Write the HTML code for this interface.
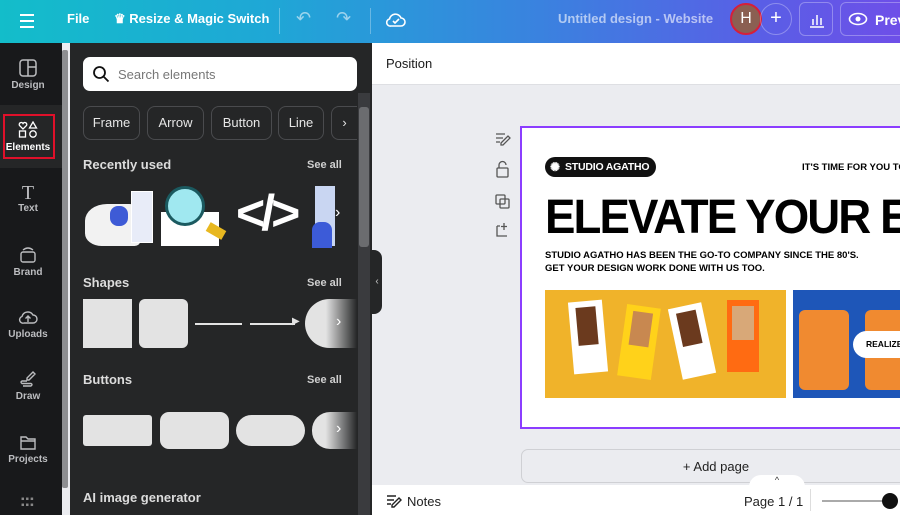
<!DOCTYPE html>
<html><head><meta charset="utf-8"><style>
*{box-sizing:border-box;margin:0;padding:0}
body{width:900px;height:515px;overflow:hidden;font-family:"Liberation Sans",sans-serif;position:relative;background:#ebecf0}
.a{position:absolute}
.top{left:0;top:0;width:900px;height:43px;background:linear-gradient(90deg,#13bdca 0%,#1fa7d6 30%,#3a82df 60%,#5a5ee6 85%,#6e4fe8 100%);color:#fff;font-weight:bold;font-size:13px}
.rail{left:0;top:43px;width:62px;height:472px;background:#18191b}
.ri{position:absolute;left:0;width:56px;text-align:center;color:#bcbdc0;font-size:10px;font-weight:bold}
.ri svg{display:block;margin:0 auto 3px}
.panel{left:70px;top:43px;width:302px;height:472px;background:#252627}
.chip{position:absolute;top:63px;height:34px;border:1px solid #4a4b4e;border-radius:8px;color:#e6e6e6;font-size:13px;line-height:32px;text-align:center}
.h{position:absolute;color:#dcdcdc;font-size:13px;font-weight:bold}
.sa{position:absolute;left:237px;color:#cfcfcf;font-size:11px;font-weight:bold}
.lg{background:#e3e3e3}
</style></head><body>
<div class="a top">
  <div class="a" style="left:20px;top:14px;width:14px"><div style="height:2px;background:#fff;margin-bottom:4px"></div><div style="height:2px;background:#fff;margin-bottom:4px"></div><div style="height:2px;background:#fff"></div></div>
  <div class="a" style="left:67px;top:11px">File</div>
  <div class="a" style="left:114px;top:11px;white-space:nowrap">♛ Resize &amp; Magic Switch</div>
  <div class="a" style="left:279px;top:8px;width:1px;height:26px;background:rgba(255,255,255,.3)"></div>
  <div class="a" style="left:296px;top:8px;font-size:18px;font-weight:normal;opacity:.55">↶</div>
  <div class="a" style="left:336px;top:8px;font-size:18px;font-weight:normal;opacity:.55">↷</div>
  <div class="a" style="left:370px;top:8px;width:1px;height:26px;background:rgba(255,255,255,.3)"></div>
  <svg class="a" style="left:385px;top:10px" width="22" height="20" viewBox="0 0 22 20"><path d="M6 16h10a4 4 0 0 0 0-8 6 6 0 0 0-11.5 1A3.5 3.5 0 0 0 6 16z" fill="none" stroke="#fff" stroke-width="1.6"/><path d="M8 11l2 2 4-4" fill="none" stroke="#fff" stroke-width="1.6"/></svg>
  <div class="a" style="left:558px;top:11px;color:rgba(255,255,255,.6);font-size:13px">Untitled design - Website</div>
  <div class="a" style="left:730px;top:3px;width:32px;height:32px;border-radius:50%;background:#8b5f52;border:2px solid #d61f3a;text-align:center;line-height:28px;font-weight:normal;font-size:16px">H</div>
  <div class="a" style="left:760px;top:3px;width:32px;height:32px;border-radius:50%;border:1px solid rgba(255,255,255,.3);text-align:center;line-height:29px;font-size:20px;font-weight:normal">+</div>
  <div class="a" style="left:799px;top:2px;width:34px;height:34px;border-radius:6px;border:1px solid rgba(255,255,255,.3)"><svg width="34" height="34"><path d="M10 24h14M13 22v-6M17 22v-10M21 22v-7" stroke="#fff" stroke-width="1.5"/></svg></div>
  <div class="a" style="left:840px;top:2px;width:70px;height:34px;border-radius:6px;border:1px solid rgba(255,255,255,.3)"><svg class="a" style="left:7px;top:9px" width="20" height="14"><ellipse cx="10" cy="7" rx="8.5" ry="5.5" fill="none" stroke="#fff" stroke-width="1.6"/><circle cx="10" cy="7" r="2.5" fill="#fff"/></svg><div class="a" style="left:34px;top:9px;font-size:14px">Prev</div></div>
</div>
<div class="a rail">
  <div class="ri" style="top:16px"><svg width="18" height="18"><rect x="1" y="1" width="16" height="16" rx="3" fill="none" stroke="#bcbdc0" stroke-width="1.5"/><path d="M9 1v16M9 8h8" stroke="#bcbdc0" stroke-width="1.5"/></svg>Design</div>
  <div class="a" style="left:0;top:62px;width:62px;height:63px;background:#252627"></div>
  <div class="a" style="left:3px;top:71px;width:52px;height:45px;border:2px solid #e0102a"></div>
  <div class="ri" style="top:78px;color:#fff"><svg width="20" height="18"><path d="M5 8L1.5 4.5a2 2 0 0 1 3.5-2 2 2 0 0 1 3.5 2z" fill="none" stroke="#fff" stroke-width="1.3"/><path d="M15 1l3.5 6h-7z" fill="none" stroke="#fff" stroke-width="1.3"/><rect x="1.5" y="10" width="6" height="6" fill="none" stroke="#fff" stroke-width="1.3"/><circle cx="15" cy="13" r="3.2" fill="none" stroke="#fff" stroke-width="1.3"/></svg>Elements</div>
  <div class="ri" style="top:140px"><div style="font-family:'Liberation Serif',serif;font-size:20px;line-height:20px;font-weight:normal">T</div>Text</div>
  <div class="ri" style="top:203px"><svg width="18" height="18"><rect x="2" y="6" width="14" height="10" rx="2" fill="none" stroke="#bcbdc0" stroke-width="1.4"/><path d="M4 4q5-4 10 0" fill="none" stroke="#bcbdc0" stroke-width="1.4"/></svg>Brand</div>
  <div class="ri" style="top:265px"><svg width="20" height="18"><path d="M6 15h9a4 4 0 0 0 0-8 6 6 0 0 0-11 1.5A3.3 3.3 0 0 0 6 15z" fill="none" stroke="#bcbdc0" stroke-width="1.4"/><path d="M10 14V8M7.5 10.5L10 8l2.5 2.5" fill="none" stroke="#bcbdc0" stroke-width="1.4"/></svg>Uploads</div>
  <div class="ri" style="top:327px"><svg width="18" height="18"><path d="M14 2l2 2-6 6H8V8z M8 11H3q-2 1 0 2.5h9q2 1 0 2.5H4" fill="none" stroke="#bcbdc0" stroke-width="1.4"/></svg>Draw</div>
  <div class="ri" style="top:390px"><svg width="18" height="18"><path d="M2 4h5l2 2h7v10H2z M2 8h14" fill="none" stroke="#bcbdc0" stroke-width="1.4"/></svg>Projects</div>
  <div class="a" style="left:21px;top:454px;width:16px;color:#888;font-size:10px;line-height:6px;letter-spacing:1px">▪▪▪<br>▪▪▪</div>
</div>
<div class="a" style="left:62px;top:50px;width:6px;height:438px;background:#8d8e91;border-radius:2px"></div>
<div class="a panel">
  <div class="a" style="left:13px;top:14px;width:274px;height:34px;background:#fff;border-radius:7px"><svg class="a" style="left:9px;top:8px" width="18" height="18"><circle cx="7.5" cy="7.5" r="5.5" fill="none" stroke="#111" stroke-width="1.8"/><path d="M11.5 11.5l5 5" stroke="#111" stroke-width="1.8"/></svg><div class="a" style="left:35px;top:10px;color:#777;font-size:13px">Search elements</div></div>
  <div class="chip" style="left:13px;width:57px">Frame</div>
  <div class="chip" style="left:77px;width:57px">Arrow</div>
  <div class="chip" style="left:141px;width:61px">Button</div>
  <div class="chip" style="left:208px;width:46px">Line</div>
  <div class="chip" style="left:261px;width:26px;border-right:none;border-radius:8px 0 0 8px">›</div>
  <div class="h" style="left:13px;top:114px">Recently used</div><div class="sa" style="top:116px">See all</div>
  <div class="a" style="left:13px;top:143px;width:275px;height:62px;overflow:hidden">
    <div class="a" style="left:2px;top:18px;width:55px;height:42px;background:#f2f2f2;border-radius:40% 20% 10% 30%"></div>
    <div class="a" style="left:27px;top:20px;width:18px;height:20px;background:#3e5bd6;border-radius:8px"></div>
    <div class="a" style="left:48px;top:5px;width:22px;height:52px;background:#e8ecf8;border:1px solid #fff"></div>
    <div class="a" style="left:78px;top:26px;width:58px;height:34px;background:#fff"></div>
    <div class="a" style="left:82px;top:0;width:40px;height:40px;border-radius:50%;background:#a0e8f0;border:3px solid #1b5a60"></div>
    <div class="a" style="left:124px;top:40px;width:18px;height:10px;background:#e8b820;transform:rotate(30deg)"></div>
    <div class="a" style="left:153px;top:-2px;color:#fff;font-size:50px;font-weight:bold;letter-spacing:-4px">&lt;/&gt;</div>
    <div class="a" style="left:232px;top:0;width:20px;height:60px;background:#c9d6f2"></div>
    <div class="a" style="left:229px;top:36px;width:20px;height:26px;background:#3c5bd8;border-radius:8px 8px 0 0"></div>
    <div class="a" style="left:252px;top:18px;color:#fff;font-size:16px">›</div>
  </div>
  <div class="h" style="left:13px;top:232px">Shapes</div><div class="sa" style="top:234px">See all</div>
  <div class="a lg" style="left:13px;top:256px;width:49px;height:49px"></div>
  <div class="a lg" style="left:69px;top:256px;width:49px;height:49px;border-radius:6px"></div>
  <div class="a" style="left:125px;top:280px;width:47px;height:1.5px;background:#e3e3e3"></div>
  <div class="a" style="left:180px;top:280px;width:45px;height:1.5px;background:#e3e3e3"></div>
  <div class="a" style="left:222px;top:273px;color:#e3e3e3;font-size:10px">▶</div>
  <div class="a" style="left:235px;top:256px;width:52px;height:49px;border-radius:25px 0 0 25px;background:linear-gradient(90deg,#e3e3e3 40%,#252627)"></div>
  <div class="a" style="left:266px;top:270px;color:#fff;font-size:16px">›</div>
  <div class="h" style="left:13px;top:329px">Buttons</div><div class="sa" style="top:331px">See all</div>
  <div class="a lg" style="left:13px;top:372px;width:69px;height:31px;border-radius:3px"></div>
  <div class="a lg" style="left:90px;top:369px;width:69px;height:37px;border-radius:9px"></div>
  <div class="a lg" style="left:166px;top:372px;width:69px;height:31px;border-radius:16px"></div>
  <div class="a" style="left:242px;top:369px;width:45px;height:37px;border-radius:18px 0 0 18px;background:linear-gradient(90deg,#e3e3e3 30%,#252627)"></div>
  <div class="a" style="left:266px;top:377px;color:#fff;font-size:16px">›</div>
  <div class="h" style="left:13px;top:447px">AI image generator</div>
  <div class="a" style="left:288px;top:50px;width:12px;height:422px;background:#3a3b3e"></div>
  <div class="a" style="left:289px;top:64px;width:10px;height:140px;background:#6b6c6f;border-radius:3px"></div>
</div>
<div class="a" style="left:372px;top:250px;width:10px;height:64px;background:#252627;border-radius:0 8px 8px 0;color:#ccc;font-size:10px;line-height:64px;text-align:center">‹</div>
<div class="a" style="left:372px;top:43px;width:528px;height:42px;background:#fff;border-bottom:1px solid #dedfe3"><div class="a" style="left:14px;top:13px;font-size:13px;color:#1a1a1a">Position</div></div>
<svg class="a" style="left:494px;top:131px" width="18" height="115" fill="none" stroke="#555" stroke-width="1.3"><path d="M2 3h9M2 7h7M2 11h4M7 12l7-7 2 2-7 7H7z"/><rect x="3" y="37" width="11" height="9" rx="1"/><path d="M5 37v-3a3.5 3.5 0 0 1 7 0" /><rect x="2" y="64" width="9" height="9" rx="1"/><rect x="6" y="68" width="9" height="9" rx="1"/><path d="M3 95v10h10M10 92v7M7 95.5h6M3 95h3"/></svg>
<div class="a" style="left:520px;top:126px;width:390px;height:303px;background:#fff;border:2px solid #8b3dff;overflow:hidden">
  <div class="a" style="left:23px;top:29px;width:111px;height:20px;background:#111;border-radius:10px;color:#fff;font-size:10.5px;font-weight:bold;line-height:20px;padding-left:20px;white-space:nowrap;letter-spacing:-0.2px">STUDIO AGATHO<span class="a" style="left:5px;top:0;font-size:12px">✺</span></div>
  <div class="a" style="left:280px;top:34px;font-size:9.5px;font-weight:bold;white-space:nowrap">IT'S TIME FOR YOU TO</div>
  <div class="a" style="left:23px;top:62px;font-size:48px;font-weight:bold;white-space:nowrap;letter-spacing:-2px;transform:scaleX(0.95);transform-origin:left">ELEVATE YOUR E</div>
  <div class="a" style="left:23px;top:121px;font-size:9.5px;font-weight:bold;line-height:13px;white-space:nowrap">STUDIO AGATHO HAS BEEN THE GO-TO COMPANY SINCE THE 80'S.<br>GET YOUR DESIGN WORK DONE WITH US TOO.</div>
  <div class="a" style="left:23px;top:162px;width:241px;height:108px;background:#f0b32a">
    <div class="a" style="left:26px;top:11px;width:34px;height:72px;background:#fff;transform:rotate(-5deg)"><div style="margin:6px 7px;height:38px;background:#6b3a1e"></div></div>
    <div class="a" style="left:77px;top:16px;width:34px;height:72px;background:#ffd21a;transform:rotate(8deg)"><div style="margin:6px 7px;height:34px;background:#c88850"></div></div>
    <div class="a" style="left:130px;top:15px;width:34px;height:72px;background:#fff;transform:rotate(-12deg)"><div style="margin:6px 7px;height:34px;background:#6b3a1e"></div></div>
    <div class="a" style="left:182px;top:10px;width:32px;height:72px;background:#ff6b12"><div style="margin:6px 5px;height:34px;background:#d8a878"></div></div>
  </div>
  <div class="a" style="left:271px;top:162px;width:120px;height:108px;background:#1e56b8">
    <div class="a" style="left:6px;top:20px;width:50px;height:80px;background:#f08a30;border-radius:6px"></div>
    <div class="a" style="left:72px;top:20px;width:50px;height:80px;background:#f08a30;border-radius:6px"></div>
    <div class="a" style="left:60px;top:41px;width:70px;height:27px;background:#fff;border-radius:14px;font-size:8.5px;font-weight:bold;line-height:27px;padding-left:13px">REALIZE</div>
  </div>
</div>
<div class="a" style="left:521px;top:449px;width:390px;height:34px;background:#ebecf0;border:1px solid #cfd0d4;border-radius:7px;text-align:center;line-height:34px;font-size:13px;color:#222">+ Add page</div>
<div class="a" style="left:372px;top:485px;width:528px;height:30px;background:#fff">
  <svg class="a" style="left:14px;top:9px" width="16" height="14" fill="none" stroke="#222" stroke-width="1.4"><path d="M1 2h9M1 6h7M1 10h4M6 11l7-7 2 2-7 7H6z"/></svg>
  <div class="a" style="left:35px;top:9px;font-size:13px;color:#222">Notes</div>
  <div class="a" style="left:372px;top:9px;font-size:13px;color:#222">Page 1 / 1</div>
  <div class="a" style="left:438px;top:4px;width:1px;height:22px;background:#ddd"></div>
  <div class="a" style="left:450px;top:15px;width:70px;height:2px;background:#aaa"></div>
  <div class="a" style="left:510px;top:8px;width:16px;height:16px;border-radius:50%;background:#111"></div>
</div>
<div class="a" style="left:749px;top:475px;width:56px;height:12px;background:#fff;border-radius:12px 12px 0 0;text-align:center;font-size:9px;color:#333">^</div>
</body></html>
